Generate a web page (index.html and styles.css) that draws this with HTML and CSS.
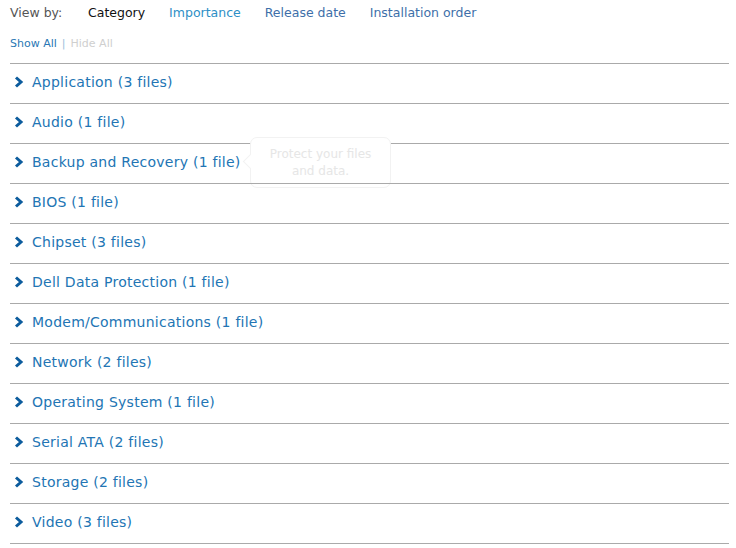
FILE: index.html
```html
<!DOCTYPE html>
<html lang="en">
<head>
  <meta charset="UTF-8" />
  <title>Drivers and Downloads</title>
  <link rel="stylesheet" href="styles.css">
</head>
<body>

  <!-- View options -->
  <div class="view-by">
    <span class="label">View by:</span>
    <span class="current">Category</span>
    <a class="option">Importance</a>
    <a class="option visited">Release date</a>
    <a class="option visited">Installation order</a>
  </div>

  <div class="toggle">
    <a class="show">Show All</a>
    <span class="sep">|</span>
    <span class="hide">Hide All</span>
  </div>

  <!-- Category list -->
  <ul class="categories">
    <li><svg class="chev" viewBox="0 0 10 12"><polyline points="2,1.5 7,6 2,10.5"/></svg>Application (3 files)</li>
    <li><svg class="chev" viewBox="0 0 10 12"><polyline points="2,1.5 7,6 2,10.5"/></svg>Audio (1 file)</li>
    <li class="has-tip"><svg class="chev" viewBox="0 0 10 12"><polyline points="2,1.5 7,6 2,10.5"/></svg>Backup and Recovery (1 file)
      <div class="tip">Protect your files<br>and data.</div>
    </li>
    <li><svg class="chev" viewBox="0 0 10 12"><polyline points="2,1.5 7,6 2,10.5"/></svg>BIOS (1 file)</li>
    <li><svg class="chev" viewBox="0 0 10 12"><polyline points="2,1.5 7,6 2,10.5"/></svg>Chipset (3 files)</li>
    <li><svg class="chev" viewBox="0 0 10 12"><polyline points="2,1.5 7,6 2,10.5"/></svg>Dell Data Protection (1 file)</li>
    <li><svg class="chev" viewBox="0 0 10 12"><polyline points="2,1.5 7,6 2,10.5"/></svg>Modem/Communications (1 file)</li>
    <li><svg class="chev" viewBox="0 0 10 12"><polyline points="2,1.5 7,6 2,10.5"/></svg>Network (2 files)</li>
    <li><svg class="chev" viewBox="0 0 10 12"><polyline points="2,1.5 7,6 2,10.5"/></svg>Operating System (1 file)</li>
    <li><svg class="chev" viewBox="0 0 10 12"><polyline points="2,1.5 7,6 2,10.5"/></svg>Serial ATA (2 files)</li>
    <li><svg class="chev" viewBox="0 0 10 12"><polyline points="2,1.5 7,6 2,10.5"/></svg>Storage (2 files)</li>
    <li><svg class="chev" viewBox="0 0 10 12"><polyline points="2,1.5 7,6 2,10.5"/></svg>Video (3 files)</li>
  </ul>

</body>
</html>
```

FILE: styles.css
```css
body {
  margin: 0;
  padding: 0 7px 0 10px;
  font-family: 'DejaVu Sans', Tahoma, Verdana, sans-serif;
  background: #fff;
  color: #333;
}

.view-by {
  display: flex;
  height: 25px;
  align-items: center;
  font-size: 12.5px;
}

.view-by .label {
  color: #555;
  width: 78px;
}

.view-by .current {
  color: #111;
  margin-right: 24px;
}

.view-by .option {
  color: #2d8fc6;
  margin-right: 24px;
  cursor: pointer;
}

.view-by .option.visited {
  color: #3e6fa9;
}

.toggle {
  display: flex;
  align-items: center;
  gap: 5px;
  height: 36px;
  font-size: 11px;
  padding-bottom: 2px;
}

.toggle .show {
  color: #2a78b4;
  cursor: pointer;
}

.toggle .sep {
  color: #9bc0db;
}

.toggle .hide {
  color: #cfcfcf;
}

.categories {
  list-style: none;
  margin: 0;
  padding: 0;
  border-bottom: 1px solid #aaa;
}

.categories li {
  position: relative;
  display: flex;
  align-items: center;
  height: 36px;
  padding: 0 0 3px 4px;
  border-top: 1px solid #aaa;
  font-size: 14px;
  letter-spacing: 0.25px;
  color: #2275b4;
  cursor: pointer;
}

.chev {
  width: 10px;
  height: 12px;
  margin: 0 8px 0 0;
}

.chev polyline {
  fill: none;
  stroke: #0c5c9d;
  stroke-width: 3;
}

.tip {
  position: absolute;
  left: 240px;
  top: -7px;
  width: 139px;
  height: 49px;
  background: #fff;
  border: 1px solid #f2f2f2;
  border-radius: 7px;
  color: #e6e6e6;
  font-size: 12px;
  line-height: 17px;
  letter-spacing: 0;
  text-align: center;
  display: flex;
  align-items: center;
  justify-content: center;
}

.tip::before {
  content: "";
  position: absolute;
  left: -6px;
  top: 18px;
  width: 10px;
  height: 10px;
  background: #fff;
  border-left: 1px solid #f2f2f2;
  border-bottom: 1px solid #f2f2f2;
  transform: rotate(45deg);
}
```
